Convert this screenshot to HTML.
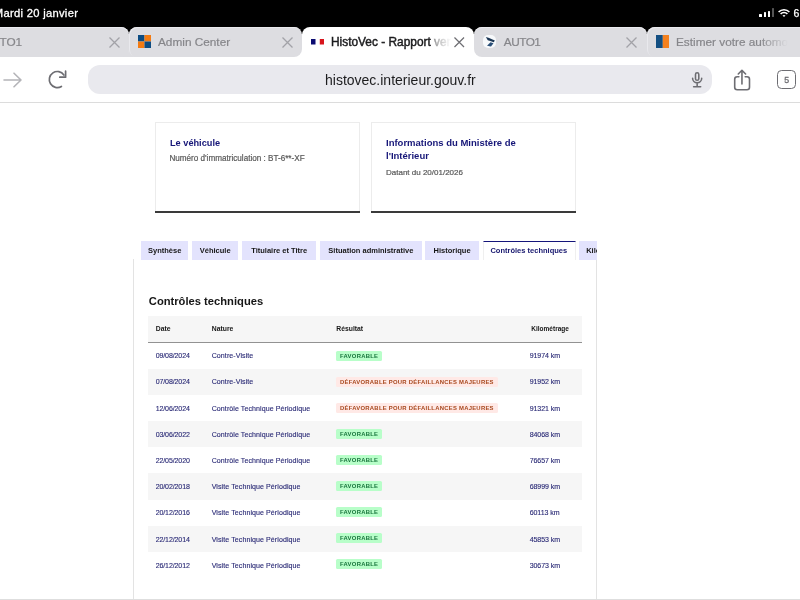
<!DOCTYPE html>
<html><head><meta charset="utf-8">
<style>
*{margin:0;padding:0;box-sizing:border-box}
html,body{width:800px;height:600px;overflow:hidden;background:#fff;font-family:"Liberation Sans",sans-serif}
#root{position:absolute;left:0;top:0;width:800px;height:600px;will-change:transform}
.a{position:absolute;white-space:nowrap;line-height:1}
svg{position:absolute;overflow:visible}
#status{position:absolute;left:0;top:0;width:800px;height:42px;background:#000}
#tabbg{position:absolute;left:0;top:34px;width:800px;height:23px;background:#dddde1}
#actbg{position:absolute;left:290px;top:46px;width:196px;height:11px;background:#fff}
.tab{position:absolute;top:26.5px;height:30.5px;background:#dddde1;border-radius:9px 9px 0 0;box-shadow:inset 0 1px 0 #eaeaee}
.tab.act{background:#fff;box-shadow:none}
.ttxt{position:absolute;font-size:11.8px;color:#86868a;line-height:1;white-space:nowrap;-webkit-text-stroke:0.2px #86868a}
#toolbar{position:absolute;left:0;top:57px;width:800px;height:45px;background:#fff}
#sep{position:absolute;left:0;top:102px;width:800px;height:1px;background:#dcdcdc}
#url{position:absolute;left:87.7px;top:65px;width:624.5px;height:28.5px;border-radius:12px;background:#e9e9ee}
.card{position:absolute;top:121.5px;width:205px;height:91.5px;border:1px solid #ececec;border-bottom:none;background:#fff}
.card:after{content:"";position:absolute;left:-1px;right:-1px;bottom:0;height:2px;background:#3a3a3a}
.ctitle{position:absolute;font-weight:bold;color:#161678;line-height:1;white-space:nowrap}
.csub{position:absolute;color:#5a5a5a;line-height:1;white-space:nowrap;-webkit-text-stroke:0.2px #5a5a5a}
#tabsclip{position:absolute;left:0;top:0;width:597px;height:600px;overflow:hidden}
.ptab{position:absolute;top:241px;height:18.5px;background:#e3e3fd;color:#161616;font-weight:bold;font-size:7.5px;line-height:19.4px;text-align:center;white-space:nowrap}
.ptab.act{background:#fff;color:#16166e;border-top:1px solid #14147a;border-left:1px solid #efefef;border-right:1px solid #efefef;line-height:17.2px;text-indent:-1px}
#panel{position:absolute;left:133px;top:259px;width:464px;height:350px;border:1px solid #e3e3e3;border-top:none;background:#fff}
#bottomline{position:absolute;left:0;top:599px;width:800px;height:1px;background:#dedede}
.th{position:absolute;top:316px;left:148px;width:434.3px;height:27px;background:#f6f6f6;border-bottom:1px solid #929292}
.thc{position:absolute;font-size:6.8px;font-weight:bold;color:#161616;line-height:1;white-space:nowrap}
.row{position:absolute;left:148px;width:434.3px;height:26.1px}
.row.g{background:#f6f6f6}
.td{position:absolute;font-size:7.05px;color:#2a2a76;line-height:1;white-space:nowrap;-webkit-text-stroke:0.12px #2a2a76}
.badge{position:absolute;height:9.8px;line-height:10.4px;font-size:5.9px;letter-spacing:0.26px;font-weight:bold;padding:0 4px;border-radius:1.5px;white-space:nowrap}
.fav{background:#b8fec9;color:#18753c}
.def{background:#ffe9e6;color:#a8481e}
</style></head><body><div id="root">
<div id="status"></div>
<div class="a" style="left:-6.2px;top:7.8px;font-size:11.2px;letter-spacing:0.3px;color:#fff;-webkit-text-stroke:0.3px #fff">Mardi 20 janvier</div>
<!-- signal -->
<div style="position:absolute;left:759px;top:14px;width:2.7px;height:3.3px;background:#fff;border-radius:0.6px"></div>
<div style="position:absolute;left:763.5px;top:12px;width:2.7px;height:5.3px;background:#fff;border-radius:0.6px"></div>
<div style="position:absolute;left:767.7px;top:10.5px;width:2.7px;height:6.8px;background:#fff;border-radius:0.6px"></div>
<div style="position:absolute;left:771.9px;top:8.3px;width:2.5px;height:9px;background:#555;border-radius:0.6px"></div>
<svg style="left:778px;top:9px" width="12" height="8" viewBox="0 0 12 8"><path d="M0.6 3 A7.5 7.5 0 0 1 11.4 3" stroke="#fff" stroke-width="1.6" fill="none"/><path d="M2.6 5 A4.6 4.6 0 0 1 9.4 5" stroke="#fff" stroke-width="1.6" fill="none"/><path d="M4.5 6.6 L6 8 L7.5 6.6 A2.2 2.2 0 0 0 4.5 6.6Z" fill="#fff"/></svg>
<div class="a" style="left:793.5px;top:7.6px;font-size:10.5px;color:#fff;-webkit-text-stroke:0.25px #fff">6</div>

<div id="tabbg"></div>
<div id="actbg"></div>
<div class="tab" style="left:-20px;width:148.5px;border-radius:8px"></div>
<div class="tab" style="left:128.5px;width:173.5px;border-radius:8px;box-shadow:inset 1px 1px 0 #e9e9ed"></div>
<div class="tab act" style="left:302px;width:172px;border-radius:8px 8px 0 0"></div>
<div class="tab" style="left:474px;width:172.5px;border-radius:8px 8px 0 8px"></div>
<div class="tab" style="left:646.5px;width:172px;border-radius:8px;box-shadow:inset 1px 1px 0 #e9e9ed"></div>

<!-- tab 1 -->
<div class="ttxt" style="left:-17px;top:37.1px">AUTO1</div>
<svg style="left:108.5px;top:37px" width="11" height="11" viewBox="0 0 11 11"><path d="M0.5 0.5L10.5 10.5M10.5 0.5L0.5 10.5" stroke="#a2a2a7" stroke-width="1.3"/></svg>
<!-- tab 2 -->
<svg style="left:138px;top:35px" width="13" height="13" viewBox="0 0 13 13"><rect x="0" y="0" width="6.5" height="6.5" fill="#0d4c82"/><rect x="6.5" y="0" width="6.5" height="6.5" fill="#f47b12"/><rect x="0" y="6.5" width="6.5" height="6.5" fill="#f47b12"/><rect x="6.5" y="6.5" width="6.5" height="6.5" fill="#0d4c82"/></svg>
<div class="ttxt" style="left:158px;top:37.1px">Admin Center</div>
<svg style="left:281.5px;top:37px" width="11" height="11" viewBox="0 0 11 11"><path d="M0.5 0.5L10.5 10.5M10.5 0.5L0.5 10.5" stroke="#a2a2a7" stroke-width="1.3"/></svg>
<!-- active tab -->
<svg style="left:311px;top:39px" width="13" height="5.5" viewBox="0 0 13 5.5"><rect x="0" y="0" width="4.5" height="5.5" fill="#0c0c72"/><rect x="8.8" y="0" width="4.2" height="5.5" fill="#d8141c"/></svg>
<div class="a" style="left:331px;top:34px;width:121px;height:16px;overflow:hidden"><div class="a" style="left:0;top:2.6px;font-size:11.9px;color:#1c1c1e;-webkit-text-stroke:0.45px #1c1c1e">HistoVec - Rapport vendeur</div></div>
<div style="position:absolute;left:432px;top:34px;width:20px;height:16px;background:linear-gradient(to right,rgba(255,255,255,0.45),rgba(255,255,255,0.75) 9px,#fff 19px)"></div>
<svg style="left:454px;top:37px" width="10.5" height="10.5" viewBox="0 0 11 11"><path d="M0.5 0.5L10.5 10.5M10.5 0.5L0.5 10.5" stroke="#6e6e73" stroke-width="1.3"/></svg>
<!-- tab 4 -->
<div style="position:absolute;left:482.5px;top:34.5px;width:13.5px;height:13px;background:#f7f9fb;border-radius:5px"></div>
<svg style="left:476px;top:30px" width="30" height="24" viewBox="0 0 30 24"><path d="M9.8 7 L11.5 7.4 L18.8 10.4 L17.8 12.3 L11.8 10.2 Z" fill="#1b3654"/><path d="M11 15.8 L14.5 12.3 L17.5 13.2 L15 16.4 Z" fill="#2a4f78"/></svg>
<div class="ttxt" style="left:503.8px;top:37px;letter-spacing:-0.5px">AUTO1</div>
<svg style="left:626px;top:37px" width="11" height="11" viewBox="0 0 11 11"><path d="M0.5 0.5L10.5 10.5M10.5 0.5L0.5 10.5" stroke="#a2a2a7" stroke-width="1.3"/></svg>
<!-- tab 5 -->
<svg style="left:656px;top:35px" width="13" height="13" viewBox="0 0 13 13"><rect x="0" y="0" width="6.8" height="13" fill="#134f82"/><rect x="6.8" y="0" width="6.2" height="13" fill="#f4811f"/></svg>
<div class="ttxt" style="left:676px;top:37.3px">Estimer votre automobile</div>
<div style="position:absolute;left:760px;top:34px;width:40px;height:16px;background:linear-gradient(to right,rgba(221,221,225,0),#dddde1 70%)"></div>

<div id="toolbar"></div>
<!-- forward -->
<svg style="left:3px;top:72px" width="20" height="16" viewBox="0 0 20 16"><path d="M1 8H18M11 1.2L18 8L11 14.8" stroke="#b4b4b8" stroke-width="1.6" fill="none" stroke-linecap="round" stroke-linejoin="round"/></svg>
<!-- reload -->
<svg style="left:40px;top:64px" width="36" height="30" viewBox="0 0 36 30"><path d="M23.9 11 A8 8 0 1 0 21.4 22.4" stroke="#6d6d72" stroke-width="1.7" fill="none" stroke-linecap="round"/><path d="M19.8 13.2 H25.6 V7.2" stroke="#6d6d72" stroke-width="1.7" fill="none" stroke-linecap="round" stroke-linejoin="round"/></svg>
<div id="url"></div>
<div class="a" style="left:325px;top:73px;font-size:14px;color:#1c1c1e">histovec.interieur.gouv.fr</div>
<!-- mic -->
<svg style="left:680px;top:64px" width="36" height="30" viewBox="0 0 36 30"><rect x="15.5" y="8.8" width="3.3" height="7.5" rx="1.65" stroke="#6d6d72" stroke-width="1.55" fill="none"/><path d="M12.6 14.2 A4.55 4.55 0 0 0 21.7 14.2 M17.15 18.9 V22.6 M13.6 22.75 H20.7" stroke="#6d6d72" stroke-width="1.55" fill="none" stroke-linecap="round"/></svg>
<!-- share -->
<svg style="left:725px;top:62px" width="36" height="36" viewBox="0 0 36 36"><path d="M13.9 14.8 H12.2 A2.5 2.5 0 0 0 9.7 17.3 V25.3 A2.5 2.5 0 0 0 12.2 27.8 H22 A2.5 2.5 0 0 0 24.5 25.3 V17.3 A2.5 2.5 0 0 0 22 14.8 H20.2" stroke="#6d6d72" stroke-width="1.6" fill="none" stroke-linecap="round"/><path d="M16.95 22 V8.6 M13.3 12 L16.95 8.3 L20.6 12" stroke="#6d6d72" stroke-width="1.6" fill="none" stroke-linecap="round" stroke-linejoin="round"/></svg>
<!-- tabs -->
<div style="position:absolute;left:777px;top:70px;width:19px;height:19px;border:1.8px solid #6d6d72;border-radius:4.5px"></div>
<div class="a" style="left:784.3px;top:75.6px;font-size:8.8px;color:#6d6d72;-webkit-text-stroke:0.3px #6d6d72">5</div>
<div id="sep"></div>

<!-- cards -->
<div class="card" style="left:155px"></div>
<div class="card" style="left:371px"></div>
<div class="ctitle" style="left:170px;top:138.8px;font-size:9.2px">Le véhicule</div>
<div class="csub" style="left:169.4px;top:155.2px;font-size:8.15px">Numéro d'immatriculation : BT-6**-XF</div>
<div class="ctitle" style="left:386px;font-size:9.5px;line-height:12.7px;top:136.9px">Informations du Ministère de<br>l'Intérieur</div>
<div class="csub" style="left:386px;top:168.5px;font-size:8px">Datant du 20/01/2026</div>

<div id="panel"></div>
<div id="tabsclip">
<div class="ptab" style="left:140.8px;width:47.7px">Synthèse</div>
<div class="ptab" style="left:192.2px;width:46px">Véhicule</div>
<div class="ptab" style="left:242.4px;width:73.6px">Titulaire et Titre</div>
<div class="ptab" style="left:320px;width:101.7px">Situation administrative</div>
<div class="ptab" style="left:425.2px;width:53.7px">Historique</div>
<div class="ptab act" style="left:483px;width:92.6px">Contrôles techniques</div>
<div class="ptab" style="left:578.7px;width:70px;text-align:left;padding-left:7.5px">Kilométrage</div>
</div>
<div class="a" style="left:148.8px;top:296px;font-size:11.2px;font-weight:bold;color:#161616">Contrôles techniques</div>
<div class="th"></div>
<div class="thc" style="left:155.8px;top:326px">Date</div>
<div class="thc" style="left:211.8px;top:326px">Nature</div>
<div class="thc" style="left:336.3px;top:326px">Résultat</div>
<div class="thc" style="left:531.3px;top:326px;font-size:6.5px">Kilométrage</div>
<div class="row" style="top:343.10px"></div>
<div class="td" style="left:155.7px;top:352.10px;letter-spacing:-0.12px">09/08/2024</div>
<div class="td" style="left:211.7px;top:352.10px;letter-spacing:0.08px">Contre-Visite</div>
<div class="td" style="left:529.7px;top:352.10px;letter-spacing:-0.08px">91974 km</div>
<div class="badge fav" style="left:336px;top:350.90px">FAVORABLE</div>
<div class="row g" style="top:369.17px"></div>
<div class="td" style="left:155.7px;top:378.30px;letter-spacing:-0.12px">07/08/2024</div>
<div class="td" style="left:211.7px;top:378.30px;letter-spacing:0.08px">Contre-Visite</div>
<div class="td" style="left:529.7px;top:378.30px;letter-spacing:-0.08px">91952 km</div>
<div class="badge def" style="left:336px;top:376.97px">DÉFAVORABLE POUR DÉFAILLANCES MAJEURES</div>
<div class="row" style="top:395.24px"></div>
<div class="td" style="left:155.7px;top:404.50px;letter-spacing:-0.12px">12/06/2024</div>
<div class="td" style="left:211.7px;top:404.50px;letter-spacing:0.08px">Contrôle Technique Périodique</div>
<div class="td" style="left:529.7px;top:404.50px;letter-spacing:-0.08px">91321 km</div>
<div class="badge def" style="left:336px;top:403.04px">DÉFAVORABLE POUR DÉFAILLANCES MAJEURES</div>
<div class="row g" style="top:421.31px"></div>
<div class="td" style="left:155.7px;top:430.70px;letter-spacing:-0.12px">03/06/2022</div>
<div class="td" style="left:211.7px;top:430.70px;letter-spacing:0.08px">Contrôle Technique Périodique</div>
<div class="td" style="left:529.7px;top:430.70px;letter-spacing:-0.08px">84068 km</div>
<div class="badge fav" style="left:336px;top:429.11px">FAVORABLE</div>
<div class="row" style="top:447.38px"></div>
<div class="td" style="left:155.7px;top:456.90px;letter-spacing:-0.12px">22/05/2020</div>
<div class="td" style="left:211.7px;top:456.90px;letter-spacing:0.08px">Contrôle Technique Périodique</div>
<div class="td" style="left:529.7px;top:456.90px;letter-spacing:-0.08px">76657 km</div>
<div class="badge fav" style="left:336px;top:455.18px">FAVORABLE</div>
<div class="row g" style="top:473.45px"></div>
<div class="td" style="left:155.7px;top:483.10px;letter-spacing:-0.12px">20/02/2018</div>
<div class="td" style="left:211.7px;top:483.10px;letter-spacing:0.08px">Visite Technique Périodique</div>
<div class="td" style="left:529.7px;top:483.10px;letter-spacing:-0.08px">68999 km</div>
<div class="badge fav" style="left:336px;top:481.25px">FAVORABLE</div>
<div class="row" style="top:499.52px"></div>
<div class="td" style="left:155.7px;top:509.30px;letter-spacing:-0.12px">20/12/2016</div>
<div class="td" style="left:211.7px;top:509.30px;letter-spacing:0.08px">Visite Technique Périodique</div>
<div class="td" style="left:529.7px;top:509.30px;letter-spacing:-0.08px">60113 km</div>
<div class="badge fav" style="left:336px;top:507.32px">FAVORABLE</div>
<div class="row g" style="top:525.59px"></div>
<div class="td" style="left:155.7px;top:535.50px;letter-spacing:-0.12px">22/12/2014</div>
<div class="td" style="left:211.7px;top:535.50px;letter-spacing:0.08px">Visite Technique Périodique</div>
<div class="td" style="left:529.7px;top:535.50px;letter-spacing:-0.08px">45853 km</div>
<div class="badge fav" style="left:336px;top:533.39px">FAVORABLE</div>
<div class="row" style="top:551.66px"></div>
<div class="td" style="left:155.7px;top:561.70px;letter-spacing:-0.12px">26/12/2012</div>
<div class="td" style="left:211.7px;top:561.70px;letter-spacing:0.08px">Visite Technique Périodique</div>
<div class="td" style="left:529.7px;top:561.70px;letter-spacing:-0.08px">30673 km</div>
<div class="badge fav" style="left:336px;top:559.46px">FAVORABLE</div>
<div id="bottomline"></div>
</div></body></html>
